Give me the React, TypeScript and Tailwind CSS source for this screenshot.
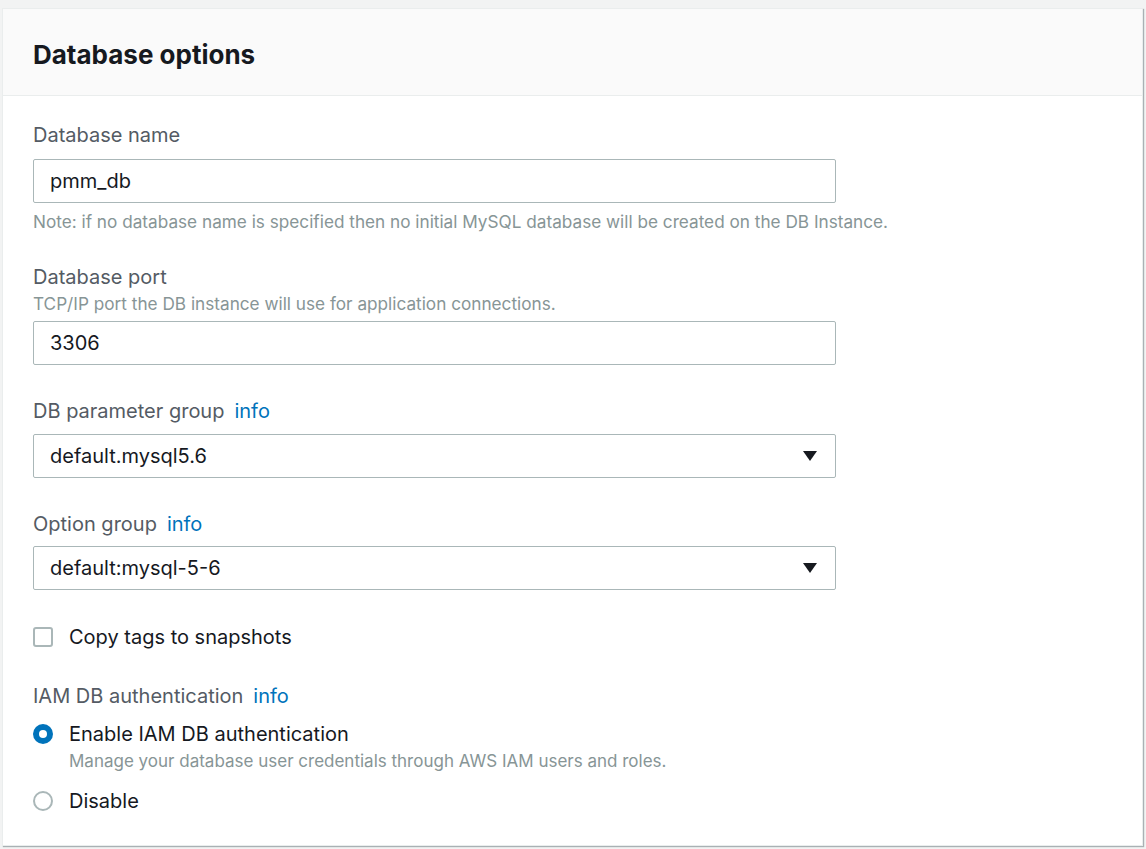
import { useState } from "react";

const FONT = "font-['Inter',_'Noto_Sans',_sans-serif]";

function Label({ text, info }: { text: string; info?: boolean }) {
  return (
    <div className="text-[20px] leading-[24px] text-[#545b64]">
      {text}
      {info && <span className="ml-[10px] text-[#0073bb]">info</span>}
    </div>
  );
}

function TextInput({ value }: { value: string }) {
  return (
    <div className="flex h-[44px] w-[803px] items-center rounded-[2px] border border-[#aab7b8] bg-white px-[16px] text-[20px] text-[#16191f]">
      {value}
    </div>
  );
}

function Select({ value }: { value: string }) {
  return (
    <div className="flex h-[44px] w-[803px] items-center justify-between rounded-[2px] border border-[#aab7b8] bg-white pl-[16px] pr-[17px] text-[20px] text-[#16191f]">
      <span>{value}</span>
      <svg width="16" height="12" viewBox="0 0 16 12">
        <path d="M1 1h14L8 11z" fill="#16191f" />
      </svg>
    </div>
  );
}

function Radio({ checked }: { checked: boolean }) {
  return checked ? (
    <span className="flex h-[20px] w-[20px] items-center justify-center rounded-full bg-[#0073bb]">
      <span className="h-[8px] w-[8px] rounded-full bg-white" />
    </span>
  ) : (
    <span className="h-[20px] w-[20px] rounded-full border-2 border-[#aab7b8] bg-white" />
  );
}

export default function App() {
  const [iam, setIam] = useState(true);
  const [copyTags, setCopyTags] = useState(false);

  return (
    <div className={`min-h-screen bg-[#f2f3f3] pt-[8px] pl-[2px] pr-[3px] ${FONT}`}>
      <div className="border border-[#eaeded] bg-white shadow-[1px_1px_1px_0_rgba(0,28,36,0.3)]">
        <div className="flex h-[87px] items-center border-b border-[#eaeded] bg-[#fafafa] px-[30px] pt-[5px]">
          <h2 className="text-[26px] font-bold text-[#16191f]">Database options</h2>
        </div>

        <div className="px-[30px] pt-[27px] pb-[32px]">
          <Label text="Database name" />
          <div className="mt-[12px]">
            <TextInput value="pmm_db" />
          </div>
          <p className="mt-[8px] text-[17.2px] leading-[22px] text-[#879596]">
            Note: if no database name is specified then no initial MySQL database will be created on the DB Instance.
          </p>

          <div className="mt-[32px]">
            <Label text="Database port" />
            <p className="mt-[4px] text-[17.2px] leading-[22px] text-[#879596]">
              TCP/IP port the DB instance will use for application connections.
            </p>
            <div className="mt-[6px]">
              <TextInput value="3306" />
            </div>
          </div>

          <div className="mt-[34px]">
            <Label text="DB parameter group" info />
            <div className="mt-[11px]">
              <Select value="default.mysql5.6" />
            </div>
          </div>

          <div className="mt-[34px]">
            <Label text="Option group" info />
            <div className="mt-[10px]">
              <Select value="default:mysql-5-6" />
            </div>
          </div>

          <label
            className="mt-[35px] flex cursor-pointer items-center gap-[16px] text-[20px] leading-[24px] text-[#16191f]"
            onClick={() => setCopyTags(!copyTags)}
          >
            <span className="h-[20px] w-[20px] rounded-[3px] border-2 border-[#aab7b8] bg-white" />
            Copy tags to snapshots
          </label>

          <div className="mt-[35px]">
            <Label text="IAM DB authentication" info />
            <div className="mt-[14px] flex gap-[16px]" onClick={() => setIam(true)}>
              <div className="pt-[2px]">
                <Radio checked={iam} />
              </div>
              <div>
                <div className="text-[20px] leading-[24px] text-[#16191f]">Enable IAM DB authentication</div>
                <div className="mt-[4px] text-[17px] leading-[22px] text-[#879596]">
                  Manage your database user credentials through AWS IAM users and roles.
                </div>
              </div>
            </div>
            <div className="mt-[17px] flex items-center gap-[16px]" onClick={() => setIam(false)}>
              <Radio checked={!iam} />
              <span className="text-[20px] leading-[24px] text-[#16191f]">Disable</span>
            </div>
          </div>
        </div>
      </div>
    </div>
  );
}
